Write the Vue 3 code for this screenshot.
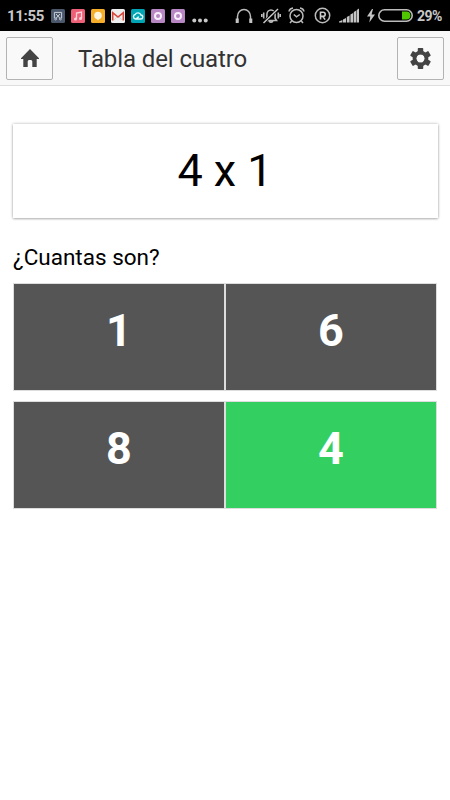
<script setup>
const answers = [
  { value: 1, correct: false },
  { value: 6, correct: false },
  { value: 8, correct: false },
  { value: 4, correct: true }
]
const teeth = [0, 60, 120, 180, 240, 300]
</script>

<template>
  <div class="screen">
    <div class="status">
      <span class="clock">11:55</span>
      <div class="apps">
        <svg viewBox="0 0 14 14"><rect width="14" height="14" rx="1.5" fill="#4b586b" /><path d="M3.4 9V3.4h7.2V9M5 5l4.2 4.5M9 5L4.8 9.5" fill="none" stroke="#c9d0d9" /><circle cx="4.6" cy="10" r="1" fill="none" stroke="#c9d0d9" stroke-width=".8" /><circle cx="9.4" cy="10" r="1" fill="none" stroke="#c9d0d9" stroke-width=".8" /></svg>
        <svg viewBox="0 0 14 14"><rect width="14" height="14" rx="1.5" fill="#ed6178" /><path d="M5.5 10V4l5-1v6.2" fill="none" stroke="#ffd5dc" stroke-width="1.3" /><circle cx="4.5" cy="10" r="1.5" fill="#ffd5dc" /><circle cx="9.5" cy="9.4" r="1.5" fill="#ffd5dc" /></svg>
        <svg viewBox="0 0 14 14"><rect width="14" height="14" rx="1.5" fill="#f6ad29" /><circle cx="7" cy="6.6" r="3.8" fill="#fff4de" /><path d="M5 9h4l-2 2.500z" fill="#fff4de" /></svg>
        <svg viewBox="0 0 14 14"><rect width="14" height="14" rx="1.5" fill="#eee" /><path d="M1.7 11.5V3.6L7 8l5.3-4.4v7.9" fill="none" stroke="#d8453b" stroke-width="1.6" /><path d="M3 11l3-3m5 3L8 8" stroke="#ccc" stroke-width=".7" /></svg>
        <svg viewBox="0 0 14 14"><rect width="14" height="14" rx="1.5" fill="#00a4b3" /><path d="M4.400 10h5.200a2 2 0 0 0 .3-4A3.100 3.100 0 0 0 4.200 5.500A2.300 2.300 0 0 0 4.400 10c1.500 0 2-2 3.500-2" fill="none" stroke="#e3fafa" stroke-width="1.400" /></svg>
        <svg v-for="n in 2" :key="n" viewBox="0 0 14 14"><rect width="14" height="14" rx="1.5" fill="#b787c3" /><circle cx="7" cy="7" r="3" fill="none" stroke="#f8effa" stroke-width="2" /><circle cx="7.5" cy="6.600" r="1" fill="#b787c3" /></svg>
      </div>
      <svg class="dots" viewBox="0 0 16 5"><g fill="#c8c8c8"><circle cx="2.300" cy="2.500" r="2" /><circle cx="8" cy="2.500" r="2" /><circle cx="13.700" cy="2.500" r="2" /></g></svg>
      <div class="system">
        <svg class="phones" viewBox="0 0 18 16"><path d="M2.500 14V8.500a6.500 7 0 0 1 13 0V14" fill="none" stroke="#bbb" stroke-width="1.500" /><path d="M.7 10.500h3v4.500h-3zM14.300 10.500h3v4.500h-3z" fill="#c4c4c4" /></svg>
        <svg class="mute" viewBox="0 0 20 16"><path d="M4.500 12.500h11l-1.400-2.200V6.500a4.100 4.500 0 0 0-8.200 0v3.800zM8 13.300q2 2 4 0M2.700 4.500v6M.8 6v3M17.300 4.500v6M19.200 6v3" fill="none" stroke="#bbb" stroke-width="1.600" /><path d="M2.500 15L17 1" stroke="#000" stroke-width="3" /><path d="M2.500 15L17 1" stroke="#ccc" stroke-width="1.400" /></svg>
        <svg class="alarm" viewBox="0 0 17 17"><g fill="none" stroke="#bbb" stroke-width="1.500"><circle cx="8.500" cy="9" r="6.500" /><path d="M1 4.500Q1.500 1.500 5 1M16 4.500Q15.500 1.500 12 1M5.800 7.500l2.700 2.400L11.800 7.500M3.700 14L2 16M13.300 14L15 16" /></g></svg>
        <svg class="reg" viewBox="0 0 17 17"><circle cx="8.500" cy="8.500" r="7.200" fill="none" stroke="#bbb" stroke-width="1.500" /><path d="M6.500 12.500V5.200h2.600a2 2 0 0 1 0 4.200H6.500M8.800 9.400l2.300 3.200" fill="none" stroke="#ccc" stroke-width="1.600" /></svg>
        <svg class="signal" viewBox="0 0 20 15"><path d="M0 14.500h3.400v-2.500L0 13.500zM4 14.500h3V10L4 11.500zM7.800 14.500h2.800V7.500L7.800 9zM11.400 14.500h2.800V5l-2.800 1.500zM14.800 14.500h2.500V2.500l-2.500 1.500zM17.800 14.500H20V.5L17.800 2z" fill="#c4c4c4" /></svg>
        <svg class="bolt" viewBox="0 0 8 14"><path d="M5 0L0 7.500h3.300L2.300 13.500 8 5.600H4.600L6 0z" fill="#c4c4c4" /></svg>
        <svg class="battery" viewBox="0 0 35 13"><rect x=".8" y=".8" width="33.400" height="11.400" rx="5.700" fill="none" stroke="#bcbcbc" stroke-width="1.600" /><path d="M24 2.600h4.500a3.900 3.900 0 0 1 0 7.800H24z" fill="#4fc600" /></svg>
      </div>
      <span class="percent">29%</span>
    </div>

    <header class="bar">
      <button class="tool" aria-label="Inicio">
        <svg class="home" viewBox="0 0 20 18"><path d="M10 0L1 9.300V10h2.300v8h4.400v-5.500q0-1.500 1.300-1.500h2q1.300 0 1.300 1.500V18h4.400v-8H19v-.7z" fill="#444" /></svg>
      </button>
      <h1>Tabla del cuatro</h1>
      <button class="tool" aria-label="Ajustes">
        <svg class="gear" viewBox="-10 -10 20 20"><g fill="#444"><rect v-for="a in teeth" :key="a" x="-2.600" y="-10" width="5.200" height="6" rx=".7" :transform="`rotate(${a})`" /></g><circle r="5.700" fill="none" stroke="#444" stroke-width="3.600" /></svg>
      </button>
    </header>

    <main>
      <section class="card">4 x 1</section>
      <p class="prompt">¿Cuantas son?</p>
      <div class="answers">
        <button v-for="a in answers" :key="a.value" class="answer" :class="{ correct: a.correct }">{{ a.value }}</button>
      </div>
    </main>
  </div>
</template>

<style>
body { background: #fff; }
</style>

<style scoped>
* { box-sizing: border-box; }
svg { display: block; flex: none; }
.screen { width: 450px; height: 800px; overflow: hidden; background: #fff; font-family: Roboto, "Liberation Sans", sans-serif; color: #000; }
.status { height: 31px; background: #000; display: flex; align-items: center; padding-left: 7px; color: #c8c8c8; white-space: nowrap; }
.clock { width: 44px; font-size: 15px; font-weight: 700; line-height: 20px; padding-top: 1px; letter-spacing: -.3px; }
.apps { display: flex; gap: 6px; }
.apps svg { width: 14px; height: 14px; }
.dots { width: 16px; height: 5px; margin: 10px 0 0 7px; }
.system { display: flex; align-items: center; margin-left: 27px; }
.phones { width: 18px; height: 16px; }
.mute { width: 20px; height: 16px; margin-left: 8px; }
.alarm { width: 17px; height: 17px; margin-left: 7px; }
.reg { width: 17px; height: 17px; margin-left: 9px; }
.signal { width: 20px; height: 15px; margin-left: 8px; }
.bolt { width: 8px; height: 14px; margin-left: 8px; }
.battery { width: 35px; height: 13px; margin-left: 3px; }
.percent { margin-left: 4px; font-size: 14px; font-weight: 700; padding-top: 1px; letter-spacing: -.5px; }
.bar { height: 55px; background: #f8f8f8; border-bottom: 1px solid #dedede; display: flex; align-items: center; padding: 0 6px; }
.tool { width: 47px; height: 43px; border: 1px solid #b3b3b3; border-radius: 2px; background: #f9f9f9; display: flex; align-items: center; justify-content: center; padding: 0; }
.home { width: 20px; height: 18px; }
.gear { width: 21px; height: 21px; }
h1 { flex: 1; margin: 0 0 0 25px; padding-top: 2px; font-size: 24px; line-height: 30px; font-weight: 400; letter-spacing: -.1px; color: #333; }
main { padding: 38px 13px 0; }
.card { height: 94px; margin: 0 -.5px; background: #fff; box-shadow: 0 0 3px rgba(0, 0, 0, .28), 0 1px 2px rgba(0, 0, 0, .2); text-align: center; font-size: 45px; line-height: 94px; }
.prompt { margin: 24px 0 0; height: 30px; font-size: 22.500px; line-height: 30px; }
.answers { display: grid; grid-template-columns: 1fr 1fr; row-gap: 10px; margin-top: 11px; }
.answer { height: 108px; border: 1px solid #ddd; border-radius: 0; background: #555; color: #fff; padding: 0 0 12px; font-family: Roboto, sans-serif; font-size: 45px; font-weight: 700; line-height: 94px; }
.correct { background: #34cf61; }
</style>
